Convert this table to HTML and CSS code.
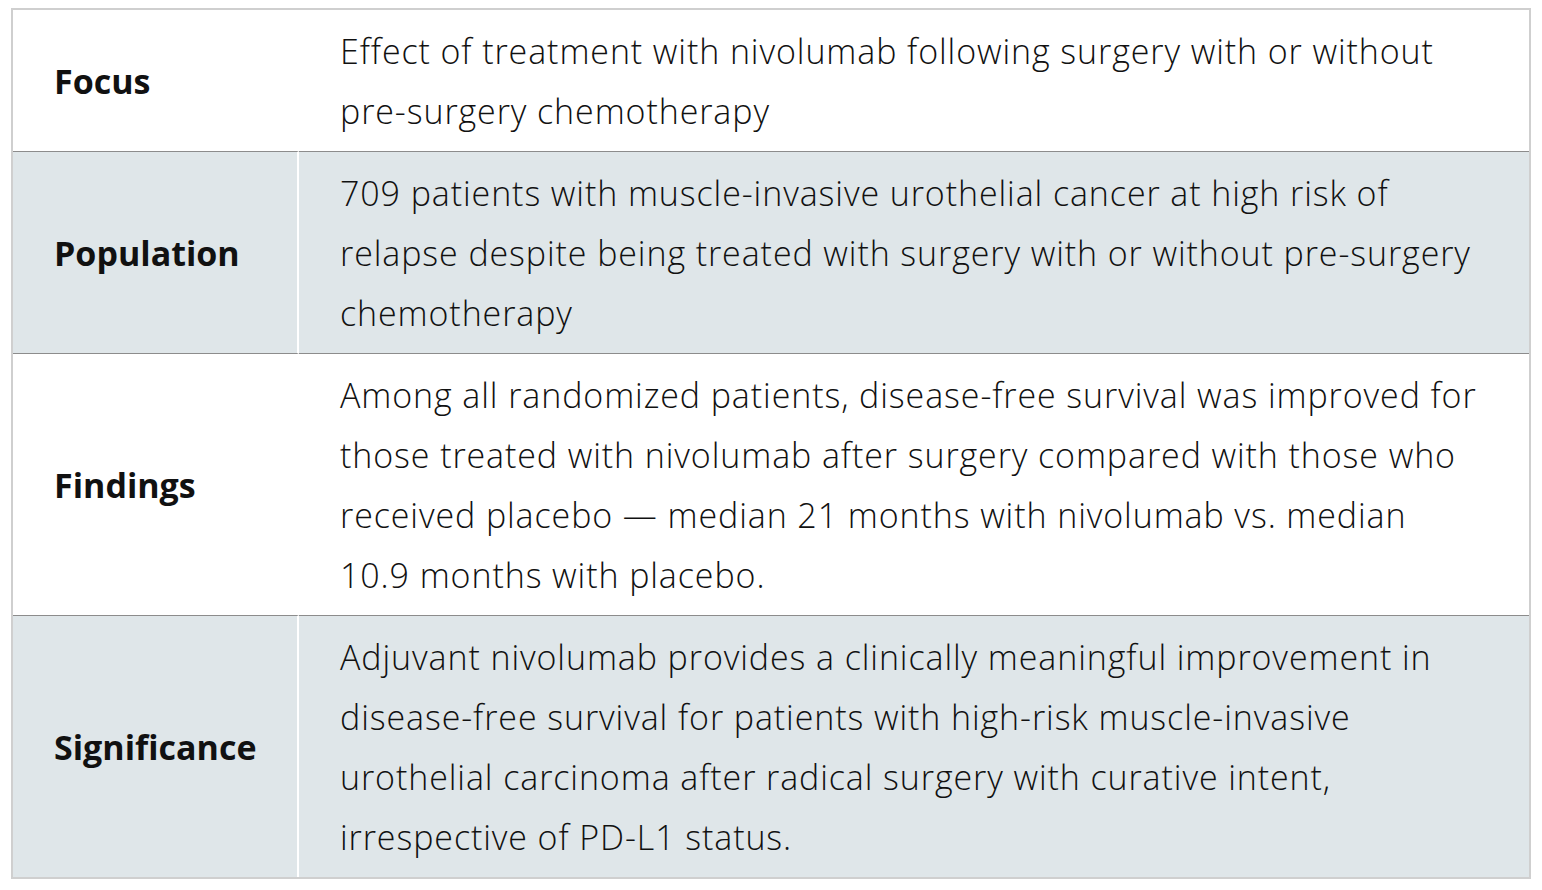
FILE: index.html
```html
<!DOCTYPE html>
<html lang="en">
<head>
<meta charset="utf-8">
<title>Trial summary</title>
<link rel="stylesheet" href="styles.css">
</head>
<body>
<table class="summary">
  <tbody>
    <tr class="row">
      <th class="label">Focus</th>
      <td class="value">Effect of treatment with nivolumab following surgery with or without pre-surgery chemotherapy</td>
    </tr>
    <tr class="row shaded">
      <th class="label">Population</th>
      <td class="value">709 patients with muscle-invasive urothelial cancer at high risk of relapse despite being treated with surgery with or without pre-surgery chemotherapy</td>
    </tr>
    <tr class="row">
      <th class="label">Findings</th>
      <td class="value">Among all randomized patients, disease-free survival was improved for those treated with nivolumab after surgery compared with those who received placebo — median 21 months with nivolumab vs. median 10.9 months with placebo.</td>
    </tr>
    <tr class="row shaded last">
      <th class="label">Significance</th>
      <td class="value">Adjuvant nivolumab provides a clinically meaningful improvement in disease-free survival for patients with high-risk muscle-invasive urothelial carcinoma after radical surgery with curative intent, irrespective of PD-L1 status.</td>
    </tr>
  </tbody>
</table>
</body>
</html>
```

FILE: styles.css
```css
html, body {
  margin: 0;
  background: #ffffff;
}

body {
  padding: 8px 11px;
  font-family: "Open Sans", "Liberation Sans", sans-serif;
  color: #111111;
}

.summary {
  width: 1520px;
  border-collapse: separate;
  border-spacing: 0;
  border: 2px solid #cfcfcf;
  font-size: 34px;
  line-height: 60px;
}

.row .label,
.row .value {
  border-bottom: 1px solid #8c8c8c;
  vertical-align: middle;
  text-align: left;
}

.row.last .label,
.row.last .value {
  border-bottom: none;
}

.label {
  width: 286px;
  padding: 11px 0 10px 41px;
  box-sizing: border-box;
  font-weight: 700;
  border-right: 2px solid #ffffff;
}

.value {
  padding: 11px 49px 10px 41px;
  font-weight: 300;
  letter-spacing: 0.9px;
}

.shaded .label,
.shaded .value {
  background: #dfe6e9;
}
```
